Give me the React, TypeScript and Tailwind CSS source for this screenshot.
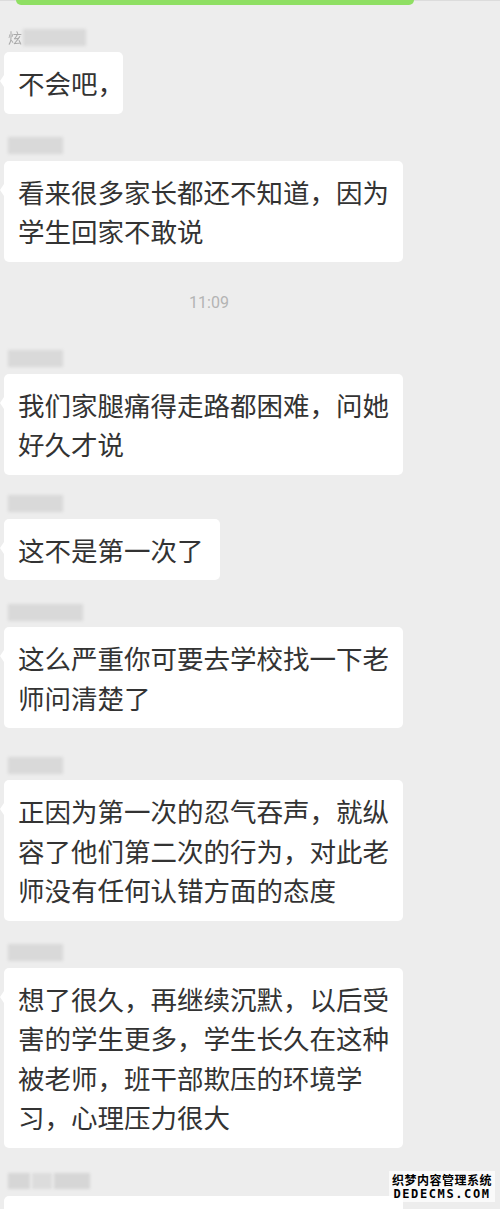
type Msg = {
  nameTop: number;
  nameW: number;
  lead?: string;
  text: string;
  short?: string;
};

const messages: Msg[] = [
  { nameTop: 23, nameW: 63, lead: "炫", text: "不会吧，", short: "w-[119px]" },
  { nameTop: 23, nameW: 55, text: "看来很多家长都还不知道，因为学生回家不敢说" },
];

const messages2: Msg[] = [
  { nameTop: 37, nameW: 55, text: "我们家腿痛得走路都困难，问她好久才说" },
  { nameTop: 20, nameW: 55, text: "这不是第一次了", short: "w-[216px]" },
  { nameTop: 23, nameW: 75, text: "这么严重你可要去学校找一下老师问清楚了" },
  { nameTop: 28, nameW: 55, text: "正因为第一次的忍气吞声，就纵容了他们第二次的行为，对此老师没有任何认错方面的态度" },
  { nameTop: 23, nameW: 55, text: "想了很久，再继续沉默，以后受害的学生更多，学生长久在这种被老师，班干部欺压的环境学习，心理压力很大" },
];

function Name({ w, lead }: { w: number; lead?: string }) {
  return (
    <div className="flex items-center h-[18px] pl-[8px] gap-[1px]">
      {lead && (
        <span className="text-[14px] leading-[18px] text-[#a9a9a9] blur-[0.6px] font-['Noto_Sans_CJK_SC',sans-serif]">
          {lead}
        </span>
      )}
      <div className="h-[17px] bg-[#d9d9d9] blur-[1.5px]" style={{ width: w }} />
    </div>
  );
}

function Bubble({ text, short }: { text: string; short?: string }) {
  const width = short ? `${short} whitespace-nowrap pr-0` : "w-[399px] pr-[10px]";
  return (
    <div className={`relative ml-[4px] mt-[6px] bg-white rounded-[5px] pl-[14px] py-[11px] text-[26.5px] leading-[39.5px] text-[#333333] ${width}`}>
      <span className="absolute left-[-4px] top-[23px] w-0 h-0 border-y-[6px] border-y-transparent border-r-[4px] border-r-white" />
      {text}
    </div>
  );
}

function Message({ m }: { m: Msg }) {
  return (
    <div style={{ marginTop: m.nameTop }}>
      <Name w={m.nameW} lead={m.lead} />
      <Bubble text={m.text} short={m.short} />
    </div>
  );
}

export default function App() {
  return (
    <div className="relative w-[500px] h-[1209px] overflow-hidden bg-[#ededed] font-['Noto_Sans_CJK_SC','Noto_Sans',sans-serif]">
      <div className="h-px bg-[#dcdcdc]" />
      <div className="ml-[16px] -mt-px w-[398px] h-[5px] bg-[#8fdf63] rounded-b-[5px]" />

      {messages.map((m, i) => (
        <Message key={i} m={m} />
      ))}

      <div className="w-[418px] mt-[31px] h-[20px] text-center text-[16px] leading-[20px] text-[#b4b4b4] font-['Roboto',sans-serif]">
        11:09
      </div>

      {messages2.map((m, i) => (
        <Message key={i} m={m} />
      ))}

      <div className="mt-[24px]">
        <div className="flex items-center h-[18px] pl-[8px] gap-[2px]">
          <div className="h-[16px] w-[22px] bg-[#d6d6d6] blur-[1.5px]" />
          <div className="h-[16px] w-[20px] bg-[#dcdcdc] blur-[1.5px]" />
          <div className="h-[16px] w-[36px] bg-[#d6d6d6] blur-[1.5px]" />
        </div>
        <div className="ml-[4px] mt-[6px] w-[399px] h-[40px] bg-white rounded-[5px]" />
      </div>

      <div className="absolute left-[389px] top-[1171px] px-[3px] py-[1px] bg-white/70 flex flex-col items-center whitespace-nowrap">
        <span className="text-[12px] leading-[15px] font-bold text-black tracking-[0.5px] font-['Noto_Sans_CJK_SC',sans-serif]">
          织梦内容管理系统
        </span>
        <span className="text-[12px] leading-[14px] font-bold text-black tracking-[1.6px] font-['DejaVu_Sans_Mono',monospace]">
          DEDECMS.COM
        </span>
      </div>
    </div>
  );
}
